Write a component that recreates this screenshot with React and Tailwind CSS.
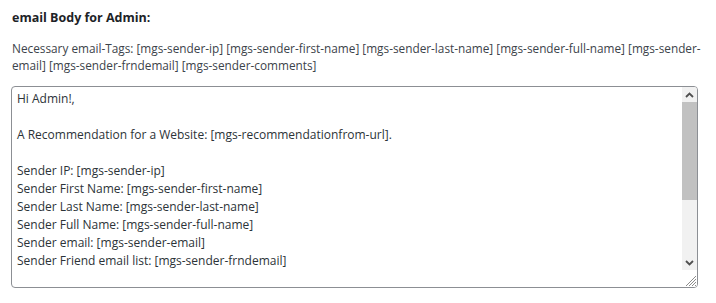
const body = `Hi Admin!,

A Recommendation for a Website: [mgs-recommendationfrom-url].

Sender IP: [mgs-sender-ip]
Sender First Name: [mgs-sender-first-name]
Sender Last Name: [mgs-sender-last-name]
Sender Full Name: [mgs-sender-full-name]
Sender email: [mgs-sender-email]
Sender Friend email list: [mgs-sender-frndemail]

Sender Comments: [mgs-sender-comments]

Thank you,
Your Website Team`;

function Chevron({ up }) {
  return (
    <svg width="9" height="6" viewBox="0 0 9 6" className={up ? '' : 'rotate-180'}>
      <path d="M1 5 L4.5 1.5 L8 5" fill="none" stroke="#505050" strokeWidth="1.8" />
    </svg>
  );
}

export default function App() {
  return (
    <div className="bg-white w-[716px] h-[303px] px-3 pt-[9px] text-[#3c434a] font-['Open_Sans',sans-serif]">
      <h3 className="text-[12.5px] font-bold text-[#1d2327] leading-[18px]">email Body for Admin:</h3>
      <p className="mt-[13px] text-[11.8px] leading-[17px]">
        Necessary email-Tags: [mgs-sender-ip] [mgs-sender-first-name] [mgs-sender-last-name] [mgs-sender-full-name] [mgs-sender-email] [mgs-sender-frndemail] [mgs-sender-comments]
      </p>
      <div className="mt-[12px] -ml-px flex w-[687px] h-[202px] border border-[#8c8f94] rounded-[4px] overflow-hidden">
        <textarea
          className="flex-1 h-full px-[5px] py-[3px] text-[12px] leading-[18px] text-[#2c3338] resize-none overflow-hidden font-['Open_Sans',sans-serif] outline-none"
          defaultValue={body}
          readOnly
        />
        <div className="w-[15px] flex flex-col">
          <div className="h-[15px] bg-[#f1f1f1] flex items-center justify-center">
            <Chevron up />
          </div>
          <div className="h-[98px] bg-[#c1c1c1]" />
          <div className="flex-1 bg-[#f1f1f1]" />
          <div className="h-[15px] bg-[#f1f1f1] flex items-center justify-center">
            <Chevron />
          </div>
          <div className="h-[17px] bg-white flex items-end justify-end">
            <svg width="13" height="13" viewBox="0 0 13 13">
              <path d="M12 2 L2 12 M12 5 L5 12 M12 8 L8 12 M12 11 L11 12" stroke="#8c8c8c" strokeWidth="1" />
            </svg>
          </div>
        </div>
      </div>
    </div>
  );
}
